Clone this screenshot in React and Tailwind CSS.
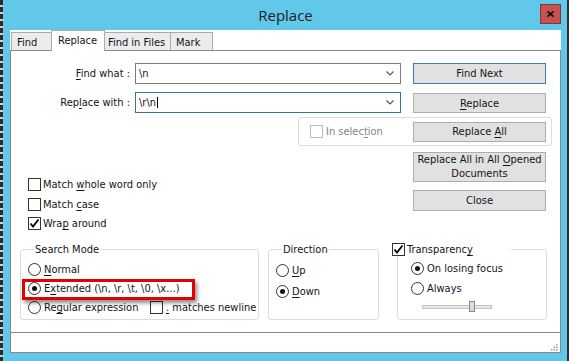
import React from 'react';

const UI = "font-['DejaVu_Sans_Condensed','Liberation_Sans',sans-serif]";

const U = ({ children }) => <span className="underline underline-offset-[2px] decoration-1">{children}</span>;

const Check = ({ checked, disabled }) => (
  <span
    className={`inline-flex shrink-0 w-[13px] h-[13px] items-center justify-center border bg-white ${
      disabled ? 'border-[#bcbcbc]' : 'border-[#333333]'
    }`}
  >
    {checked && (
      <svg width="11" height="11" viewBox="0 0 11 11">
        <path d="M1.5 5.5 L4 8.5 L9.5 1.5" fill="none" stroke="#000" strokeWidth="1.8" />
      </svg>
    )}
  </span>
);

const Radio = ({ checked }) => (
  <span className="inline-flex shrink-0 w-[13px] h-[13px] items-center justify-center rounded-full border border-[#333333] bg-white">
    {checked && <span className="w-[5px] h-[5px] rounded-full bg-[#111]" />}
  </span>
);

const Btn = ({ children, className = '' }) => (
  <div
    className={`w-[133px] flex items-center justify-center text-center border bg-[#e1e1e1] ${className}`}
  >
    {children}
  </div>
);

const Chevron = () => (
  <svg width="8" height="5" viewBox="0 0 8 5" className="ml-auto mr-[6px]">
    <path d="M0.5 0.5 L4 4 L7.5 0.5" fill="none" stroke="#555" strokeWidth="1.2" />
  </svg>
);

export default function App() {
  return (
    <div className={`flex w-[569px] h-[361px] overflow-hidden ${UI} text-[11px] leading-[13px] text-[#141414]`}>
      {/* edge of whatever is behind the window */}
      <div className="w-[3px] bg-[repeating-linear-gradient(180deg,#2b2b2b_0px,#2b2b2b_5px,#cfcfcf_5px,#cfcfcf_7px)]" />

      <div className="flex-1 flex flex-col bg-[#62c8ea] pl-[7px] pr-[6px] pb-[8px]">
        {/* title bar */}
        <div className="h-[30px] flex items-start">
          <div className="w-[21px]" />
          <div className="flex-1 text-center pt-[6px] font-['Open_Sans',sans-serif] text-[15px] leading-[18px] text-[#1c1c1c]">
            Replace
          </div>
          <div className="mt-[4px] w-[21px] h-[20px] bg-[#c75050] border border-[#7e3a36] flex items-center justify-center">
            <svg width="7" height="6" viewBox="0 0 7 6">
              <path d="M0.5 0.5 L6.5 5.5 M6.5 0.5 L0.5 5.5" stroke="#000" strokeWidth="1.6" />
            </svg>
          </div>
        </div>

        {/* client */}
        <div className="flex-1 flex flex-col bg-white">
          {/* tabs */}
          <div className="h-[20px] flex items-end pl-[1px]">
            <div className="w-[41px] h-[18px] border-t border-l border-r border-[#acacac] bg-[#ececec] pl-[5px] pt-[3px]">Find</div>
            <div className="relative z-10 -mb-[1px] w-[54px] h-[21px] border-t border-l border-r border-[#acacac] bg-white pl-[6px] pt-[3px] -ml-[1px]">Replace</div>
            <div className="w-[67px] h-[18px] border-t border-l border-r border-[#acacac] bg-[#ececec] pl-[3px] pt-[3px] -ml-[1px]">Find in Files</div>
            <div className="w-[43px] h-[18px] border-t border-l border-r border-[#acacac] bg-[#ececec] pl-[5px] pt-[3px] -ml-[1px]">Mark</div>
          </div>

          {/* tab panel */}
          <div className="flex-1 flex flex-col border border-[#898989]">
            <div className="h-[281px] flex flex-col pt-[12px]">
              {/* find what */}
              <div className="flex items-center h-[21px]">
                <div className="w-[119px] text-right">
                  <U>F</U>ind what :
                </div>
                <div className="ml-[5px] w-[266px] h-[21px] border border-[#7a7a7a] flex items-center pl-[3px]">
                  <span>\n</span>
                  <Chevron />
                </div>
                <Btn className="ml-[12px] h-[21px] border-[#3c7fb1]">Find Next</Btn>
              </div>

              {/* replace with */}
              <div className="flex items-center h-[21px] mt-[8px]">
                <div className="w-[119px] text-right">
                  Rep<U>l</U>ace with :
                </div>
                <div className="ml-[5px] w-[266px] h-[21px] border border-[#3f6f9c] flex items-center pl-[3px]">
                  <span>{'\\r\\n'}</span>
                  <span className="w-px h-[11px] bg-black ml-[1px]" />
                  <Chevron />
                </div>
                <Btn className="ml-[12px] h-[20px] mt-[1px] border-[#adadad]">
                  <span>
                    <U>R</U>eplace
                  </span>
                </Btn>
              </div>

              {/* in selection group */}
              <div className="mt-[4px] ml-[287px] w-[254px] h-[29px] border border-[#dcdcdc] rounded-[3px] flex items-center">
                <div className="ml-[11px] flex items-center">
                  <Check disabled />
                  <span className="ml-[3px] text-[#838383]">
                    In selec<U>t</U>ion
                  </span>
                </div>
                <Btn className="ml-auto mr-[5px] h-[20px] border-[#adadad]">
                  <span>
                    Replace <U>A</U>ll
                  </span>
                </Btn>
              </div>

              {/* options + remaining buttons */}
              <div className="mt-[6px] flex">
                <div className="w-[402px] pl-[17px] pt-[26px] flex flex-col">
                  <div className="h-[13px] flex items-center">
                    <Check />
                    <span className="ml-[2px]">
                      Match <U>w</U>hole word only
                    </span>
                  </div>
                  <div className="h-[13px] mt-[7px] flex items-center">
                    <Check />
                    <span className="ml-[2px]">
                      Match <U>c</U>ase
                    </span>
                  </div>
                  <div className="h-[13px] mt-[6px] flex items-center">
                    <Check checked />
                    <span className="ml-[2px]">
                      Wra<U>p</U> around
                    </span>
                  </div>
                </div>
                <div className="flex flex-col">
                  <Btn className="h-[30px] border-[#adadad] leading-[14px]">
                    <span>
                      Replace All in All <U>O</U>pened
                      <br />
                      Documents
                    </span>
                  </Btn>
                  <Btn className="mt-[8px] h-[21px] border-[#adadad]">Close</Btn>
                </div>
              </div>

              {/* group boxes */}
              <div className="mt-[13px] flex">
                <fieldset className="ml-[9px] w-[239px] h-[77px] border border-[#dcdcdc] rounded-[3px] pl-[7px]">
                  <legend className="ml-[6px] px-[1px] leading-[13px]">Search Mode</legend>
                  <div className="pt-[7px] flex flex-col">
                    <div className="h-[13px] flex items-center">
                      <Radio />
                      <span className="ml-[3px]">
                        <U>N</U>ormal
                      </span>
                    </div>
                    <div className="relative h-[13px] mt-[6px] flex items-center">
                      <Radio checked />
                      <span className="ml-[3px]">
                        E<U>x</U>tended (\n, \r, \t, \0, \x...)
                      </span>
                      <div className="absolute -left-[6px] -top-[3px] w-[173px] h-[21px] border-[3px] border-[#e30000] shadow-[2px_3px_4px_rgba(0,0,0,0.45)]" />
                    </div>
                    <div className="h-[13px] mt-[6px] flex items-center">
                      <div className="w-[122px] flex items-center">
                        <Radio />
                        <span className="ml-[3px]">
                          Re<U>g</U>ular expression
                        </span>
                      </div>
                      <Check />
                      <span className="ml-[3px]">
                        <U>.</U> matches newline
                      </span>
                    </div>
                  </div>
                </fieldset>

                <fieldset className="ml-[9px] w-[111px] h-[77px] border border-[#dcdcdc] rounded-[3px] pl-[7px]">
                  <legend className="ml-[6px] px-[1px] leading-[13px]">Direction</legend>
                  <div className="pt-[8px] flex flex-col">
                    <div className="h-[13px] flex items-center">
                      <Radio />
                      <span className="ml-[3px]">
                        <U>U</U>p
                      </span>
                    </div>
                    <div className="h-[13px] mt-[8px] flex items-center">
                      <Radio checked />
                      <span className="ml-[3px]">
                        <U>D</U>own
                      </span>
                    </div>
                  </div>
                </fieldset>

                <fieldset className="ml-[18px] w-[150px] h-[77px] border border-[#dcdcdc] rounded-[3px]">
                  <legend className="-ml-[6px] w-[119px] flex items-center h-[13px]">
                    <Check checked />
                    <span className="ml-[2px]">
                      Transparenc<U>y</U>
                    </span>
                  </legend>
                  <div className="pt-[6px] pl-[13px] flex flex-col">
                    <div className="h-[13px] flex items-center">
                      <Radio checked />
                      <span className="ml-[3px]">On losing focus</span>
                    </div>
                    <div className="h-[13px] mt-[7px] flex items-center">
                      <Radio />
                      <span className="ml-[3px]">Always</span>
                    </div>
                    <div className="relative ml-[11px] mt-[10px] w-[70px] h-[4px] border border-[#c6c6c6] bg-[#e7e7e7]">
                      <div className="absolute left-[46px] -top-[5px] w-[6px] h-[11px] border border-[#8a8a8a] bg-[#dadada]" />
                    </div>
                  </div>
                </fieldset>
              </div>
            </div>

            {/* status strip */}
            <div className="flex-1 border-t border-[#898989] flex items-end justify-end pr-[2px] pb-[1px]">
              <svg width="7" height="7" viewBox="0 0 7 7">
                <rect x="5" y="0" width="1.5" height="1.5" fill="#a0a0a0" />
                <rect x="2.5" y="2.5" width="1.5" height="1.5" fill="#a0a0a0" />
                <rect x="5" y="2.5" width="1.5" height="1.5" fill="#a0a0a0" />
                <rect x="0" y="5" width="1.5" height="1.5" fill="#a0a0a0" />
                <rect x="2.5" y="5" width="1.5" height="1.5" fill="#a0a0a0" />
                <rect x="5" y="5" width="1.5" height="1.5" fill="#a0a0a0" />
              </svg>
            </div>
          </div>
        </div>
      </div>

      <div className="w-[2px] bg-[#2e2e2e]" />
    </div>
  );
}
